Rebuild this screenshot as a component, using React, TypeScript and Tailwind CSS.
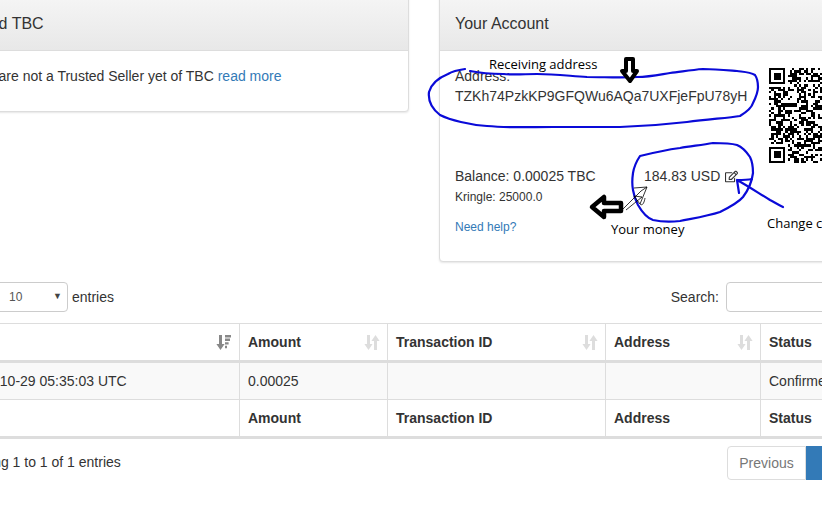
import React from 'react';
import { FaRegEdit } from 'react-icons/fa';

const SortIcon = ({ active = false }: { active?: boolean }) => (
  <svg width="16" height="15" viewBox="0 0 16 15" className={active ? 'text-[#888]' : 'text-[#ddd]'}>
    <path d="M3 0h3v9h2.6L4.5 15 .4 9H3z" fill="currentColor" />
    {active ? (
      <path d="M9 0h6v2.4H9zM9 3.6h5v2.4H9zM9 7.2h3.6v2.4H9zM9 10.8h2v2.4H9z" fill="currentColor" />
    ) : (
      <path d="M10 15h3V6h2.6L11.5 0 7.4 6H10z" fill="currentColor" />
    )}
  </svg>
);

// fake qr: finder patterns + seeded noise, 41 modules, only the left part shows
const QrCode = () => {
  const n = 41;
  const cells: React.ReactNode[] = [];
  const inFinder = (x: number, y: number) => (x < 8 && y < 8) || (x < 8 && y >= n - 8) || (x >= n - 8 && y < 8);
  let seed = 17;
  for (let y = 0; y < n; y++) {
    for (let x = 0; x < n; x++) {
      seed = (seed * 1103515245 + 12345) & 0x7fffffff;
      if (!inFinder(x, y) && (seed >> 16) % 100 < 52) {
        cells.push(<rect key={`${x}-${y}`} x={x} y={y} width="1" height="1" />);
      }
    }
  }
  const finder = (x: number, y: number) => (
    <g key={`f${x}-${y}`}>
      <path fillRule="evenodd" d={`M${x} ${y}h7v7h-7zM${x + 1} ${y + 1}v5h5v-5z`} />
      <rect x={x + 2} y={y + 2} width="3" height="3" />
    </g>
  );
  return (
    <svg width="95" height="95" viewBox="0 0 41 41" shapeRendering="crispEdges" className="shrink-0 text-black" fill="currentColor">
      {finder(0, 0)}
      {finder(0, n - 7)}
      {finder(n - 7, 0)}
      {cells}
    </svg>
  );
};

const Panel = ({ title, className, children }: { title: string; className: string; children: React.ReactNode }) => (
  <div className={`rounded-[4px] border border-[#ddd] bg-white shadow-[0_1px_2px_rgba(0,0,0,0.1)] ${className}`}>
    <div className="flex h-[54px] items-center border-b border-[#ddd] bg-gradient-to-b from-[#f5f5f5] to-[#e8e8e8] px-[15px] text-[16px] text-[#333]">
      {title}
    </div>
    {children}
  </div>
);

const thClass = 'border border-[#ddd] px-2 text-left font-bold';

const HeadCell = ({ label, width, active }: { label: string; width: string; active?: boolean }) => (
  <th className={`${thClass} ${width} h-[38px] border-b-[3px] border-b-[#ddd]`}>
    <div className="-mr-px flex items-center justify-between">
      <span>{label}</span>
      <SortIcon active={active} />
    </div>
  </th>
);

const Annotations = () => (
  <svg width="822" height="509" viewBox="0 0 822 509" fill="none" className="absolute left-0 top-0">
    <g stroke="#0a0ad8" strokeWidth="2.2" strokeLinecap="round" strokeLinejoin="round">
      <path d="M465 69C458 70 453 71 448 74C438 78 431 85 429 92C428 100 431 108 440 115C450 120 470 125 487 126C510 128 530 127 553 127L620 127C650 126 670 124 687 122C710 119 728 118 740 116C748 111 752 107 753 103C756 97 758 92 758 87C758 81 757 78 755 75C750 72 745 72 737 71C725 70 715 69 703 69C690 70 680 72 670 73C658 75 650 77 637 77C620 78 605 77 587 77C570 76 555 74 537 74C525 74 515 75 503 74C490 74 480 73 470 71" />
      <path d="M640 156C636 162 634 167 633 173C632 180 632 185 633 190C634 197 636 201 638 205C642 212 647 218 653 220C662 222 670 222 680 221C695 218 708 216 720 212C730 207 738 203 743 197C749 189 752 181 753 173C753 166 752 161 750 157C746 151 742 147 737 145C730 143 722 143 713 143C702 145 692 146 680 148C665 150 652 153 640 156Z" />
      <path d="M783 207L781 206C777 204 774 202 770 200C760 194 748 186 737 180M737 180C742 180 747 180 752 179M737 180L739 193" />
    </g>
    <path d="M626 59h7v12h4l-7 10-8-10h4z" fill="#fff" stroke="#000" strokeWidth="4" strokeLinejoin="round" />
    <path d="M592 207l12-10v6h17v8h-17v6z" fill="#fff" stroke="#000" strokeWidth="4.5" strokeLinejoin="round" />
    <g stroke="#000" strokeWidth="0.8">
      <path d="M623 209L641 191L647 187L640 204L634 196L642 197L626 210" />
      <path d="M634 188L647 187M640 204C642 206 644 204 645 198" />
    </g>
  </svg>
);

export default function App() {
  return (
    <div className="relative h-[509px] w-[822px] overflow-hidden bg-white font-['Liberation_Sans',Arial,sans-serif] text-[14px] text-[#333]">
      <div className="-ml-[45px] -mt-[4px] w-[938px]">
        <div className="flex items-start gap-[30px]">
          <Panel title="Fund TBC" className="w-[454px]">
            <div className="h-[60px] px-[15px] pt-[15px] leading-5">
              You are not a Trusted Seller yet of TBC <span className="text-[#337ab7]">read more</span>
            </div>
          </Panel>
          <Panel title="Your Account" className="w-[454px]">
            <div className="flex h-[210px] pl-[15px] pt-[15px]">
              <div className="w-[314px] shrink-0">
                <div className="leading-5">Address:</div>
                <div className="leading-5">TZKh74PzkKP9GFQWu6AQa7UXFjeFpU78yH</div>
                <div className="mt-[60px] flex leading-5">
                  <span className="w-[189px]">Balance: 0.00025 TBC</span>
                  <span className="flex items-center gap-[5px]">
                    184.83 USD <FaRegEdit size={13} className="mt-px" />
                  </span>
                </div>
                <div className="mt-[1px] text-[12px] leading-[20px]">Kringle: 25000.0</div>
                <div className="mt-[10px] text-[12px] leading-[20px] text-[#337ab7]">Need help?</div>
              </div>
              <div className="mt-[2px]">
                <QrCode />
              </div>
            </div>
          </Panel>
        </div>

        <div className="mt-[20px] flex items-center justify-between">
          <div className="flex items-center gap-[4px]">
            <div className="relative flex h-[30px] w-[113px] items-center rounded-[4px] border border-[#ccc] pl-[53px] text-[12px] text-[#555]">
              10
              <span className="absolute right-[5px] top-[7px] text-[9px] text-[#444]">▼</span>
            </div>
            <span>entries</span>
          </div>
          <div className="flex items-center gap-[7px]">
            <span>Search:</span>
            <div className="h-[30px] w-[167px] rounded-[4px] border border-[#ccc]" />
          </div>
        </div>

        <table className="mt-[11px] w-[938px] table-fixed border-collapse">
          <thead>
            <tr>
              <HeadCell label="" width="w-[284px]" active />
              <HeadCell label="Amount" width="w-[148px]" />
              <HeadCell label="Transaction ID" width="w-[218px]" />
              <HeadCell label="Address" width="w-[155px]" />
              <th className={`${thClass} h-[38px] border-b-[3px] border-b-[#ddd]`}>Status</th>
            </tr>
          </thead>
          <tbody>
            <tr className="h-[38px] bg-[#f9f9f9]">
              <td className="border border-[#ddd] px-2">2017-10-29 05:35:03 UTC</td>
              <td className="border border-[#ddd] px-2">0.00025</td>
              <td className="border border-[#ddd] px-2" />
              <td className="border border-[#ddd] px-2" />
              <td className="border border-[#ddd] px-2">Confirmed</td>
            </tr>
          </tbody>
          <tfoot>
            <tr className="h-[38px] border-b-[3px] border-b-[#ddd]">
              <th className={thClass} />
              <th className={thClass}>Amount</th>
              <th className={thClass}>Transaction ID</th>
              <th className={thClass}>Address</th>
              <th className={thClass}>Status</th>
            </tr>
          </tfoot>
        </table>

        <div className="mt-[7px] flex items-center justify-between">
          <span className="-mt-[2px]">Showing 1 to 1 of 1 entries</span>
          <div className="flex h-[34px] items-stretch">
            <div className="flex w-[79px] items-center justify-center rounded-l-[4px] border border-[#ddd] text-[#777]">Previous</div>
            <div className="flex w-[39px] items-center justify-center bg-[#337ab7] text-white">1</div>
            <div className="flex w-[48px] items-center justify-center rounded-r-[4px] border border-[#ddd] text-[#777]">Next</div>
          </div>
        </div>
      </div>

      <Annotations />
      <span className="absolute left-[489px] top-[55px] whitespace-nowrap font-['Open_Sans',sans-serif] text-[13px] leading-[18px] text-black">Receiving address</span>
      <span className="absolute left-[611px] top-[220px] whitespace-nowrap font-['Open_Sans',sans-serif] text-[13px] leading-[18px] text-black">Your money</span>
      <span className="absolute left-[767px] top-[214px] whitespace-nowrap font-['Open_Sans',sans-serif] text-[13px] leading-[18px] text-black">Change currency</span>
    </div>
  );
}
